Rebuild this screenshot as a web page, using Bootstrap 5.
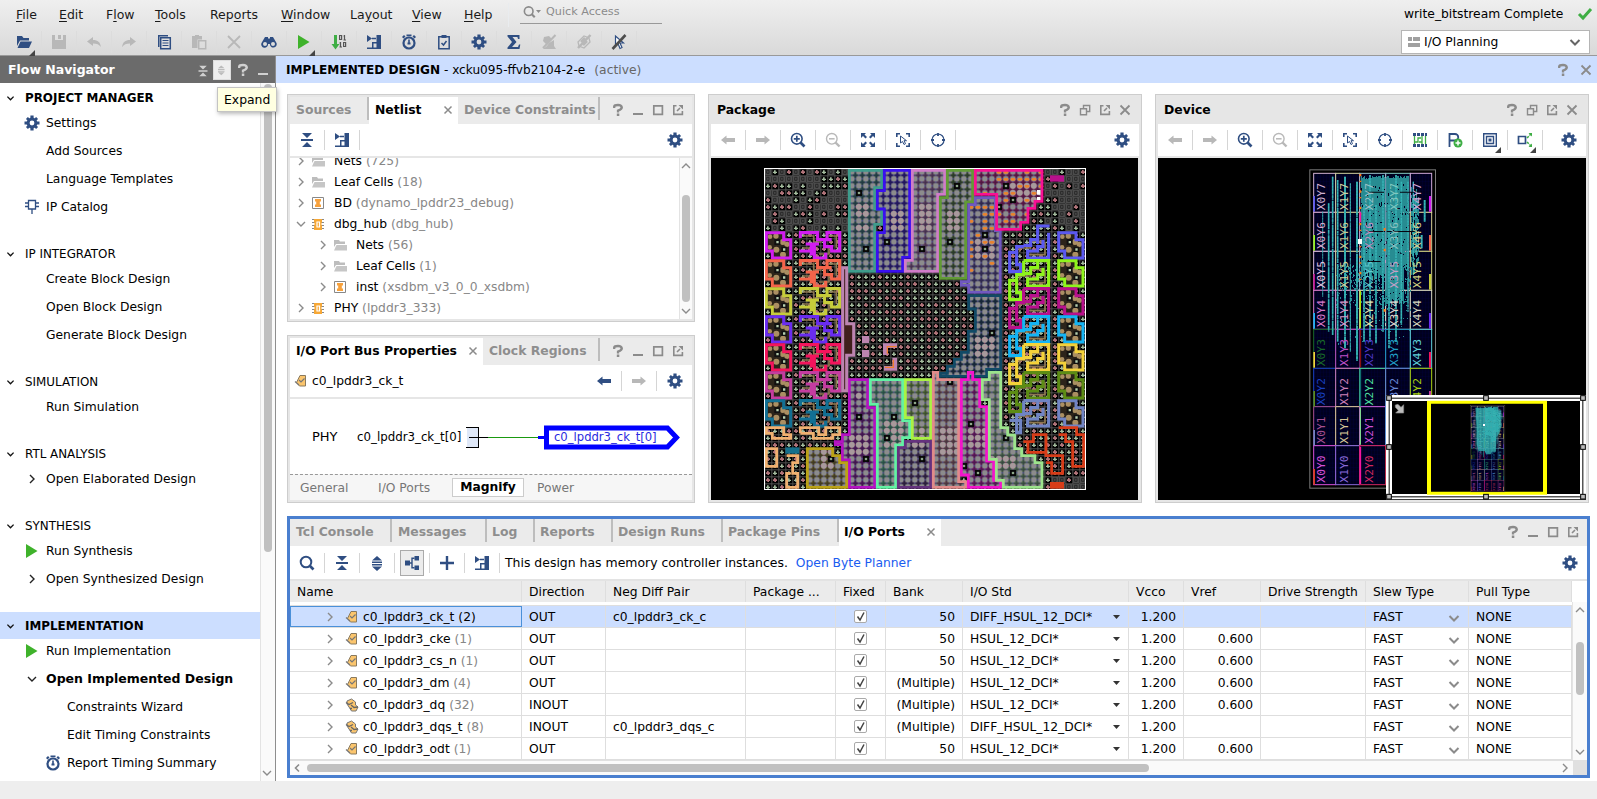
<!DOCTYPE html>
<html lang="en">
<head>
<meta charset="utf-8">
<title>I/O Planning</title>
<link href="https://cdn.jsdelivr.net/npm/bootstrap@5.3.0/dist/css/bootstrap.min.css" rel="stylesheet">
<style>
:root{--ink:#2f4e82;--dim:#8b8b8b;--off:#b8b8b8;--line:#cdcdcd;--chrome:#e6e6e6;--sel:#ccdeff}
body{font:12.3px/16px "DejaVu Sans",sans-serif;color:#000;width:1597px;height:799px;overflow:hidden;background:#fff}
svg.ic{width:16px;height:16px;flex:none;color:var(--ink);display:block}
svg.gy{color:var(--dim)} svg.off{color:var(--off)}
.topbar{height:56px;background:linear-gradient(#efefef,#d9d9d9);border-bottom:1px solid #999}
.menus{height:29px;padding-left:16px;font-size:12.5px}
.menus span{display:block;color:#1a1a1a}
.menus u{text-underline-offset:2px}
.quick{width:142px;height:24px;margin-left:11px;border-bottom:1px solid #999;color:#8b8b8b;font-size:11.2px;padding-left:3px}
.tools{height:27px;padding:2px 0 0 7px}
.tools>div{width:35px;height:22px;border-right:1px solid #dcdcdc;position:relative}
.tools>div>svg{margin:3px 0 0 9px}
.corner::after{content:"";position:absolute;right:6px;bottom:-3px;border:3px solid transparent;border-right-color:#444;border-bottom-color:#444}
.combo{width:189px;height:24px;border:1px solid #b5b5b5;background:#fff}
.side{width:276px;border-right:1px solid #8e8e8e}
.sidehead{height:27px;background:#6b6b6b;color:#fff;padding-left:8px;font-size:12.5px}
.sidehead svg{color:#d0d0d0}
.hd{height:27px;margin:19px 0 -2px;padding-left:5px;font-size:11.9px}
.hd:first-child{margin-top:0}
.hd svg.ic{margin-right:9px;width:11px;color:#111}
.it{height:28px}
.it.fw-bold{font-size:12.5px}
.it .slot{width:46px;padding-left:24px;flex:none}
.it.sub .slot{width:67px;padding-left:45px}
.it svg.blk{color:#222}
.sbar{width:15px;border-left:1px solid #e3e3e3;background:#fafafa;position:relative}
.thumb{background:#c0c0c0;border-radius:4px;width:8px}
.tip{position:absolute;left:217px;top:87px;height:25px;width:60px;background:#ffffe1;border:1px solid #c4c4c4;box-shadow:1px 2px 4px #0004;padding:4px 0 0 6px;z-index:5;font-size:12.400px}
.ident{height:27px;background:var(--sel);padding:0 10px 0 10px}
.pane{border:1px solid var(--line);background:var(--chrome);padding:2px;min-height:0}
.pane.focus{border:3px solid #4a7fcf;padding:0}
.tabs{height:27px;background:#ebebeb;font-weight:bold;font-size:12.400px;color:#8e8e8e;white-space:nowrap}
.tabs>div{height:100%;display:flex;align-items:center;padding-bottom:2px}
.tabs .sp{width:2px;height:23px;background:#bdbdbd;align-self:flex-start;flex:none}
.tabs .on{background:#fff;color:#000}
.wbtn svg{margin-right:4px}
.bar{height:32px;background:#fff;flex:none}
.bar>.b{width:35px;height:20px;border-right:1px solid #d5d5d5;display:flex;justify-content:center;align-items:center;position:relative}
.bar>.n{border:0}
.tree{background:#fff;overflow:hidden}
.tr1{height:21px;white-space:pre}
.tr1 i{font-style:normal;color:#878787}
.tr1 .ic{margin-right:6px}
.grid{display:grid;grid-template-columns:232px 84px 140px 90px 50px 77px 166px 55px 77px 105px 103px 103px}
.grid>div{border-right:1px solid #dedede;padding-left:7px;white-space:pre;display:flex;align-items:center}
.gh{height:21px;background:#ebebeb}
.gr{height:22px;border-bottom:1px solid #dedede;background:#fff}
.gr.pick{background:var(--sel)}
.gr.pick>div:first-child{outline:1px solid #4a90d9;outline-offset:-1px}
.gr i{font-style:normal;color:#878787}.gr.pick i{color:#000}
.gr .num{justify-content:flex-end;padding-right:7px}
.chk{width:13px;height:13px;border:1px solid #aaa;border-radius:2px;background:#fff}
</style>
</head>
<body class="d-flex flex-column">
<svg width="0" height="0" class="position-absolute">
<defs>
<symbol id="gear" viewBox="0 0 16 16"><g fill="currentColor"><path fill-rule="evenodd" d="M8 2.6a5.4 5.4 0 1 0 0 10.8A5.4 5.4 0 0 0 8 2.6zm0 3a2.4 2.4 0 1 1 0 4.8 2.4 2.4 0 0 1 0-4.8z"/><path d="M6.4.5h3.2v3H6.4zM6.4 12.5h3.2v3H6.4zM.5 6.4h3v3.2h-3zM12.500 6.400h3v3.200h-3z"/><path transform="rotate(45 8 8)" d="M6.6.8h2.800v2.700H6.600zM6.600 12.500h2.800v2.700H6.600zM.8 6.600h2.700v2.800H.8zM12.500 6.600h2.700v2.800h-2.700z"/></g></symbol>
<symbol id="open" viewBox="0 0 16 16"><path fill="currentColor" d="M1 2h5l1.500 2H13v2.500H4L1 12zM4.500 7.500H16L13 14H1.500z"/></symbol>
<symbol id="save" viewBox="0 0 16 16"><path fill="currentColor" fill-rule="evenodd" d="M1 1h3v5h8V1h3v14H1zM7 1h3v4H7z"/></symbol>
<symbol id="undo" viewBox="0 0 16 16"><path fill="currentColor" d="M1 7.500 7 3v3c5 0 7 2 8 7-2-2.500-4-3.500-8-3.500V12z"/></symbol>
<symbol id="redo" viewBox="0 0 16 16"><path fill="currentColor" d="M15 7.500 9 3v3c-5 0-7 2-8 7 2-2.500 4-3.500 8-3.500V12z"/></symbol>
<symbol id="copy" viewBox="0 0 16 16"><path fill="none" stroke="currentColor" stroke-width="1.500" d="M4.700 3.700h9.600v11H4.700z"/><path fill="currentColor" d="M2 1h10v1.500H3.500V13H2zM6.500 6h6v1h-6zM6.500 8.500h6v1h-6zM6.500 11h6v1h-6z"/></symbol>
<symbol id="paste" viewBox="0 0 16 16"><path fill="currentColor" d="M1 2h3V1h4v1h3v3.500H6.500V14H1z"/><path fill="none" stroke="currentColor" stroke-width="1.500" d="M7.700 6.700h7v8h-7z"/></symbol>
<symbol id="cut" viewBox="0 0 16 16"><path fill="none" stroke="currentColor" stroke-width="1.800" d="M2 2l12 12M14 2 2 14"/></symbol>
<symbol id="x" viewBox="0 0 16 16"><path fill="none" stroke="currentColor" stroke-width="1.800" d="M3.500 3.500l9 9M12.500 3.500l-9 9"/></symbol>
<symbol id="xs" viewBox="0 0 16 16"><path fill="none" stroke="currentColor" stroke-width="1.500" d="M4.500 4.500l7 7M11.500 4.500l-7 7"/></symbol>
<symbol id="bino" viewBox="0 0 16 16"><path fill="currentColor" fill-rule="evenodd" d="M4 3h3v1.500h2V3h3l3.500 6a3.400 3.400 0 1 1-6.600 1H7A3.400 3.400 0 1 1 .5 9zM4 8a2 2 0 1 0 0 4 2 2 0 0 0 0-4zm8 0a2 2 0 1 0 0 4 2 2 0 0 0 0-4z"/></symbol>
<symbol id="play" viewBox="0 0 16 16"><path fill="#3fb22b" d="M2 1l11.500 7L2 15z"/></symbol>
<symbol id="bits" viewBox="0 0 16 16"><path fill="#3fae45" d="M3 1h3v9h2.500l-4 5.500L.5 10H3z"/><path fill="none" stroke="#555" stroke-width="1.200" d="M8.600 1.500h2v4h-2zM13.500 1v5M12.500 2h1M12.500 6H15M9.500 8v5M8.500 9h1M8.500 13H11M12.600 8.500h2v4h-2z"/></symbol>
<symbol id="sch" viewBox="0 0 16 16"><path fill="currentColor" d="M1 1l5 3.500L1 8zM6 3.800h4v1.400H6zM10.500 1H15v14h-4.500zM6 8h5v1.500H7.500v4H11V15H1v-1.500h5z"/></symbol>
<symbol id="clk" viewBox="0 0 16 16"><circle cx="8" cy="9" r="5.500" fill="none" stroke="currentColor" stroke-width="2.200"/><path fill="currentColor" d="M5.500.5h5v1.700h-5zM7.200 5.500h1.600v3.500H7.200zM6.500 8.500h3v2h-3zM1 3l2-2 1.500 1.500-2 2zM15 3l-2-2-1.500 1.500 2 2z"/></symbol>
<symbol id="clip" viewBox="0 0 16 16"><path fill="none" stroke="currentColor" stroke-width="1.500" d="M2.800 2.800h10.400v12H2.800zM5.500 9l2 2 3-4"/><path fill="currentColor" d="M5.500 1h5v3h-5z"/></symbol>
<symbol id="sum" viewBox="0 0 16 16"><path fill="currentColor" d="M1.500 1h12v4H12l-.6-2H6.500l4 5-4.500 5h6l1-2.500h1.300L13.500 15h-12v-1.500L6 8 1.500 2.500z"/></symbol>
<symbol id="no1" viewBox="0 0 16 16"><path fill="currentColor" d="M3 3l5-1 3 3-6 5-3-3zM8 9l5-3v6l2 3H2l4-3z"/><path stroke="currentColor" stroke-width="2" d="M14.500 1 2 14"/></symbol>
<symbol id="no2" viewBox="0 0 16 16"><path fill="none" stroke="currentColor" stroke-width="1.300" d="M2 8l6-6 5 2 1 4-6 6-5-2z"/><path stroke="currentColor" stroke-width="2.500" d="M14.500 1 2 14M5 8l4-4M7 11l4-4"/></symbol>
<symbol id="no3" viewBox="0 0 16 16"><path fill="#fff" stroke="currentColor" stroke-width="1.200" d="M4.500 2v10l2.500-2.500 2 5 2-1-2-4.500h3.500z"/><path stroke="#4d4d4d" stroke-width="2.600" d="M14.500 1 1.500 15"/></symbol>
<symbol id="mag" viewBox="0 0 16 16"><circle cx="7" cy="7" r="5.300" fill="none" stroke="currentColor" stroke-width="2"/><path stroke="currentColor" stroke-width="2.600" d="M10.500 10.500l4 4"/></symbol>
<symbol id="zi" viewBox="0 0 16 16"><circle cx="6.800" cy="6.800" r="5.300" fill="none" stroke="currentColor" stroke-width="1.600"/><path stroke="currentColor" stroke-width="2.600" d="M10.500 10.500l4 4"/><path stroke="currentColor" stroke-width="1.700" d="M3.800 6.800h6M6.800 3.800v6"/></symbol>
<symbol id="zo" viewBox="0 0 16 16"><circle cx="6.800" cy="6.800" r="5.300" fill="none" stroke="currentColor" stroke-width="1.400"/><path stroke="currentColor" stroke-width="2.400" d="M10.500 10.500l4 4"/><path stroke="currentColor" stroke-width="1.500" d="M4 6.800h5.600"/></symbol>
<symbol id="fit" viewBox="0 0 16 16"><path fill="currentColor" d="M1 1h5L4.500 2.500 7 5 5.500 6.500 3 4 1 6zM15 1h-5l1.500 1.500L9 5l1.500 1.500L13 4l2 2zM1 15h5l-1.500-1.500L7 11 5.500 9.500 3 12l-2-2zM15 15h-5l1.500-1.500L9 11l1.500-1.500L13 12l2-2z"/></symbol>
<symbol id="fsel" viewBox="0 0 16 16"><path fill="none" stroke="currentColor" stroke-width="1.600" d="M5 1.800H1.800V5M11 1.800h3.200V5M5 14.200H1.800V11M11 14.200h3.200V11"/><path fill="#fff" stroke="currentColor" d="M5.500 4v7l2-1.500 1.500 3 1.500-.8-1.500-3h2.500z"/></symbol>
<symbol id="tgt" viewBox="0 0 16 16"><circle cx="8" cy="8" r="6" fill="none" stroke="currentColor" stroke-width="1.200"/><path stroke="currentColor" stroke-width="1.800" d="M8 1v3M8 12v3M1 8h3M12 8h3"/></symbol>
<symbol id="rt" viewBox="0 0 16 16"><path fill="#2f4e82" d="M1 1h3v3H1zM5 1h3v3H5zM9 1h3v3H9zM13 1h2v3h-2zM1 12h3v3H1zM5 12h3v3H5zM9 12h3v3H9zM13 12h2v3h-2z"/><path fill="none" stroke="#3fae45" stroke-width="1.300" d="M2.500 4v8M2.500 10H6V6h3M10 4v8M13.500 4v8M7 10h3"/></symbol>
<symbol id="padd" viewBox="0 0 16 16"><path fill="none" stroke="currentColor" stroke-width="1.800" d="M2.500 15V2H8a3 3 0 0 1 0 6.500H2.500"/><circle cx="11" cy="11" r="4.500" fill="#3fae45"/><path stroke="#fff" stroke-width="1.500" d="M8.500 11h5M11 8.500v5"/></symbol>
<symbol id="sq" viewBox="0 0 16 16"><path fill="none" stroke="currentColor" stroke-width="1.400" d="M1.700 1.700h12.600v12.600H1.700zM4.500 4.500h7v7h-7z"/><path fill="currentColor" d="M6.500 6.500h3v3h-3z"/></symbol>
<symbol id="brk" viewBox="0 0 16 16"><path fill="none" stroke="currentColor" stroke-width="1.700" d="M1.500 4.500h7v7h-7z"/><path stroke="#3fae45" stroke-width="1.600" stroke-dasharray="2.500 1" d="M10 6l4-4M10 10l4 4"/><path fill="#3fae45" d="M11.500 1H15v3.500zM11.500 15H15v-3.500z"/></symbol>
<symbol id="bk" viewBox="0 0 16 16"><path fill="currentColor" d="M1 8l5.500-4.500V6H15v4H6.500v2.500z"/></symbol>
<symbol id="fw" viewBox="0 0 16 16"><path fill="currentColor" d="M15 8 9.500 3.500V6H1v4h8.500v2.500z"/></symbol>
<symbol id="cola" viewBox="0 0 16 16"><path fill="currentColor" d="M3 1h10L8 6zM2 7h12v2H2zM3 15h10L8 10z"/></symbol>
<symbol id="expa" viewBox="0 0 16 16"><path fill="currentColor" d="M8 1l5 4.500H3zM3 6.500h10V8H3zM3 9h10v1.500H3zM8 16l5-4.500H3z"/></symbol>
<symbol id="hlp" viewBox="0 0 16 16"><path fill="none" stroke="currentColor" stroke-width="2.300" d="M4.200 6V4.500q.3-1.500 3.800-1.500t3.800 2.500Q11.500 7.500 8 8.500v2"/><path fill="currentColor" d="M6.800 11.500h2.500V14H6.800z"/></symbol>
<symbol id="min" viewBox="0 0 16 16"><path fill="currentColor" d="M3 11h10v2H3z"/></symbol>
<symbol id="max" viewBox="0 0 16 16"><path fill="none" stroke="currentColor" stroke-width="1.700" d="M3.800 3.800h8.600v8.600H3.800z"/></symbol>
<symbol id="flt" viewBox="0 0 16 16"><path fill="none" stroke="currentColor" stroke-width="1.600" d="M6.500 3.800H3.800v8.600h8.600V9M7 9l3-3"/><path fill="currentColor" d="M8.500 3H13v4.500z"/></symbol>
<symbol id="rst" viewBox="0 0 16 16"><path fill="none" stroke="currentColor" stroke-width="1.400" d="M6.500 6.500V3.500h6.200v6H10M3.500 6.700h6v6h-6z"/></symbol>
<symbol id="dn" viewBox="0 0 16 16"><path fill="none" stroke="currentColor" stroke-width="2" d="M3.500 6l4.500 4.500L12.500 6"/></symbol>
<symbol id="dt" viewBox="0 0 16 16"><path fill="none" stroke="currentColor" stroke-width="1.400" d="M4 6l4 4 4-4"/></symbol>
<symbol id="up" viewBox="0 0 16 16"><path fill="none" stroke="currentColor" stroke-width="1.400" d="M4 10l4-4 4 4"/></symbol>
<symbol id="rg" viewBox="0 0 16 16"><path fill="none" stroke="currentColor" stroke-width="1.400" d="M6 4l4 4-4 4"/></symbol>
<symbol id="lf" viewBox="0 0 16 16"><path fill="none" stroke="currentColor" stroke-width="1.600" d="M9 4.500 5.500 8 9 11.500"/></symbol>
<symbol id="ipc" viewBox="0 0 16 16"><path fill="none" stroke="currentColor" stroke-width="1.300" d="M4.500 1.500h7v8.500h-7zM1 4h3.500M1 7.500h3.500M11.500 4H15M11.500 7.500H15M8 10v5"/></symbol>
<symbol id="fold" viewBox="0 0 16 16"><path fill="#bdbdbd" d="M2 3h5l1 1.500h5V7H4L2 10z"/><path fill="#c6c6c6" d="M4.500 8H15v5.500H2z"/></symbol>
<symbol id="inst" viewBox="0 0 16 16"><path fill="#fff" stroke="#888" d="M2.500 2.500h11v11h-11z"/><path fill="#f7a13c" d="M5 4h6v2.500H9.800v3H11V12H5V9.500h1.200v-3H5z"/></symbol>
<symbol id="chip" viewBox="0 0 16 16"><path stroke="#888" d="M2 3.500h12M2 6.500h12M2 9.500h12M2 12.500h12"/><path fill="#f7a836" d="M4 3h8v3.500h-.5v3h.5V14H4V9.500h.5v-3H4z"/><path fill="none" stroke="#fff" stroke-width="1.200" d="M7 6h2.500v5H7z"/></symbol>
<symbol id="pout" viewBox="0 0 16 16"><path fill="#fbc56d" stroke="#8a7a5e" d="M7 2.500h5.500v10.500H6.500L3.500 9.500z"/><path fill="none" stroke="#777" stroke-width="1.200" d="M6 7l2 2 3.500-3.500M2 8.500l4 3.500"/></symbol>
<symbol id="pio" viewBox="0 0 16 16"><path fill="#fbc56d" stroke="#777" d="M3 4l4.500-2 4 3v3l2.500 2-2 4H7.500L5 10 3 7z"/><path fill="none" stroke="#666" stroke-width="1.300" d="M2 5.500l3 2 4-2M7 8l3 2.500 4-.5M6 11.500h2"/></symbol>
<symbol id="hier" viewBox="0 0 16 16"><path fill="currentColor" d="M1 5.500h5v5H1zM10.500 1H15v4.500h-4.500zM10.500 10.500H15V15h-4.500z"/><path fill="none" stroke="currentColor" stroke-width="1.400" d="M6 8h2M10.500 3.200H8v9.500h2.500"/></symbol>
<symbol id="plus" viewBox="0 0 16 16"><path fill="currentColor" d="M6.800 1h2.400v5.800H15v2.400H9.200V15H6.800V9.200H1V6.800h5.800z"/></symbol>
<symbol id="lay" viewBox="0 0 16 16"><path fill="#a0a0a0" d="M2 3h4v4H2zM7 3h7v4H7zM2 9h12v4H2z"/></symbol>
</defs></svg>

<header class="topbar d-flex flex-none">
  <div class="flex-grow-1">
    <div class="menus d-flex align-items-center">
      <span style="width:43px"><u>F</u>ile</span><span style="width:47px"><u>E</u>dit</span><span style="width:49px">F<u>l</u>ow</span><span style="width:55px"><u>T</u>ools</span><span style="width:71px">Rep<u>o</u>rts</span><span style="width:69px"><u>W</u>indow</span><span style="width:62px">La<u>y</u>out</span><span style="width:52px"><u>V</u>iew</span><span style="width:44px"><u>H</u>elp</span>
      <div class="border-start border-secondary-subtle" style="height:24px"></div>
      <div class="quick d-flex align-items-center align-self-start"><svg class="ic gy" style="width:13px"><use href="#mag"/></svg><svg width="6" height="4" style="margin-right:4px"><path fill="#8b8b8b" d="M0 0h5L2.500 3z"/></svg>Quick Access</div>
    </div>
    <div class="tools d-flex" id="tools"></div>
  </div>
  <div style="width:197px">
    <div class="d-flex align-items-center" style="height:28px;padding-left:4px">write_bitstream Complete<svg class="ic" style="color:#3fae45;margin-left:14px"><path fill="none" stroke="currentColor" stroke-width="3" d="M2 8l4 4 8-9"/></svg></div>
    <div class="combo d-flex align-items-center" style="margin-top:2px;margin-left:1px;padding:0 6px 0 4px"><svg class="ic"><use href="#lay"/></svg><span class="flex-grow-1" style="margin-left:2px">I/O Planning</span><svg class="ic" style="color:#666"><use href="#dn"/></svg></div>
  </div>
</header>

<div class="d-flex flex-grow-1" style="height:725px;min-height:0">
  <aside class="side d-flex flex-column flex-shrink-0">
    <div class="sidehead d-flex align-items-center fw-bold">Flow Navigator
      <span class="ms-auto d-flex gap-1 align-items-center pe-1"><svg class="ic" style="margin-right:-1px"><use href="#cola" transform="translate(3 3) scale(.75)"/></svg><span style="background:#eee;width:18px;height:20px;padding:2px 1px;border:1px solid #ddd"><svg class="ic" style="width:14px;color:#bbb"><use href="#expa" transform="translate(1 1) scale(.75)"/></svg></span><svg class="ic"><use href="#hlp"/></svg><svg class="ic"><use href="#min"/></svg></span></div>
    <div class="d-flex flex-grow-1 overflow-hidden">
      <div class="flex-grow-1" style="padding-top:1px" id="nav"></div>
      <div class="sbar d-flex flex-column align-items-center"><div class="thumb" style="height:468px;margin:1px 1px 0 0"></div><svg class="ic gy mt-auto" style="margin-right:2px"><use href="#dt"/></svg></div>
    </div>
  </aside>
  <div class="tip">Expand</div>
  <main class="flex-grow-1 d-flex flex-column">
    <div class="ident d-flex align-items-center"><b style="font-size:12.100px">IMPLEMENTED DESIGN</b><span style="font-size:12.100px">&nbsp;- xcku095-ffvb2104-2-e</span><span style="color:#666;margin-left:9px">(active)</span><svg class="ic gy ms-auto" style="margin-right:7px"><use href="#hlp"/></svg><svg class="ic gy" style="margin-right:-5px"><use href="#x"/></svg></div>
    <div class="d-flex" style="padding:11px 8px 0 11px;gap:13px;height:420px">
      <div class="d-flex flex-column" style="width:408px;gap:13px">
        <section class="pane d-flex flex-column" style="height:228px">
          <div class="tabs d-flex">
            <div style="width:77px;padding-left:6px">Sources</div><div class="sp"></div>
            <div class="on" style="width:89px;padding-left:6px">Netlist<svg class="ic gy ms-auto" style="margin-right:2px"><use href="#xs"/></svg></div>
            <div style="width:140px;padding-left:6px">Device Constraints</div><div class="sp"></div>
            <div class="wbtn" style="padding-left:10px"><svg class="ic gy"><use href="#hlp"/></svg><svg class="ic gy"><use href="#min"/></svg><svg class="ic gy"><use href="#max"/></svg><svg class="ic gy"><use href="#flt"/></svg></div>
          </div>
          <div class="bar d-flex align-items-center"><div class="b"><svg class="ic"><use href="#cola"/></svg></div><div class="b"><svg class="ic"><use href="#sch"/></svg></div><div class="b n ms-auto"><svg class="ic"><use href="#gear"/></svg></div></div>
          <div class="tree d-flex flex-grow-1" style="margin-top:2px"><div class="flex-grow-1" style="margin-top:-8px" id="tree"></div>
            <div class="sbar flex-shrink-0 d-flex flex-column align-items-center" style="width:13px"><svg class="ic gy"><use href="#up"/></svg><div class="thumb" style="height:107px;margin-top:21px"></div><svg class="ic gy mt-auto"><use href="#dt"/></svg></div></div>
        </section>
        <section class="pane d-flex flex-column" style="height:168px">
          <div class="tabs d-flex">
            <div class="on" style="width:193px;padding-left:6px">I/O Port Bus Properties<svg class="ic gy ms-auto" style="margin-right:2px"><use href="#xs"/></svg></div>
            <div style="width:115px;padding-left:6px">Clock Regions</div><div class="sp"></div>
            <div class="wbtn" style="padding-left:10px"><svg class="ic gy"><use href="#hlp"/></svg><svg class="ic gy"><use href="#min"/></svg><svg class="ic gy"><use href="#max"/></svg><svg class="ic gy"><use href="#flt"/></svg></div>
          </div>
          <div class="bar d-flex align-items-center"><svg class="ic" style="margin:0 2px 0 3px"><use href="#pout"/></svg><span style="margin-left:1px">c0_lpddr3_ck_t</span><div class="b ms-auto"><svg class="ic"><use href="#bk"/></svg></div><div class="b"><svg class="ic off"><use href="#fw"/></svg></div><div class="b n"><svg class="ic"><use href="#gear"/></svg></div></div>
          <svg width="402" height="75" style="background:#fff;margin-top:2px" shape-rendering="crispEdges"><text x="22" y="42" font-size="13">PHY</text><text x="67" y="42" font-size="11.800">c0_lpddr3_ck_t[0]</text><rect x="177" y="29" width="12" height="19" fill="#dfe8f8"/><path fill="none" stroke="#000" d="M176 28.500h12.500v20H176M179 38.500h19"/><path stroke="#1a9a10" d="M198 38.500h50"/><path stroke="#00f" stroke-width="3" d="M248 38.500h8"/><path fill="#fff" stroke="#00f" stroke-width="5" shape-rendering="auto" d="M256.500 29h121l9 9.500-9 9.500h-121z"/><text x="264" y="42" fill="#2a2ae0" font-size="11.600">c0_lpddr3_ck_t[0]</text></svg>
          <div class="d-flex align-items-center flex-grow-1" style="background:#f6f6f6;border-top:1px dashed #999;color:#777;padding-left:10px"><span style="width:78px">General</span><span style="width:74px">I/O Ports</span><b class="text-black text-center bg-white" style="border:1px solid #ccc;width:72px;height:19px">Magnify</b><span style="margin-left:13px">Power</span></div>
        </section>
      </div>
      <section class="pane" style="width:434px;height:409px">
        <div class="tabs d-flex" style="background:#e6e6e6;color:#000"><div style="padding-left:6px">Package</div><div class="wbtn ms-auto" style="padding-right:2px"><svg class="ic gy"><use href="#hlp"/></svg><svg class="ic gy"><use href="#rst"/></svg><svg class="ic gy"><use href="#flt"/></svg><svg class="ic gy"><use href="#x"/></svg></div></div>
        <div class="bar d-flex align-items-center" id="pbar"></div>
        <svg id="pkg" class="d-block bg-black" style="margin-top:2px" width="427" height="342" viewBox="-117 9 1281 1026"></svg>
      </section>
      <section class="pane" style="width:434px;height:409px">
        <div class="tabs d-flex" style="background:#e6e6e6;color:#000"><div style="padding-left:6px">Device</div><div class="wbtn ms-auto" style="padding-right:2px"><svg class="ic gy"><use href="#hlp"/></svg><svg class="ic gy"><use href="#rst"/></svg><svg class="ic gy"><use href="#flt"/></svg><svg class="ic gy"><use href="#x"/></svg></div></div>
        <div class="bar d-flex align-items-center" id="dbar"></div>
        <svg id="dev" class="d-block bg-black" style="margin-top:2px" width="428" height="342" viewBox="-396 9 1284 1026"></svg>
      </section>
    </div>
    <section class="pane focus d-flex flex-column" style="margin:13px 9px 0 11px;height:262px">
      <div class="tabs d-flex">
        <div style="width:100px;padding-left:6px">Tcl Console</div><div class="sp"></div><div style="width:93px;padding-left:6px">Messages</div><div class="sp"></div><div style="width:46px;padding-left:5px">Log</div><div class="sp"></div><div style="width:76px;padding-left:5px">Reports</div><div class="sp"></div><div style="width:108px;padding-left:5px">Design Runs</div><div class="sp"></div><div style="width:114px;padding-left:5px">Package Pins</div><div class="sp"></div>
        <div class="on" style="width:102px;padding-left:5px">I/O Ports<svg class="ic gy ms-auto" style="margin-right:2px"><use href="#xs"/></svg></div>
        <div class="wbtn ms-auto" style="padding-right:2px"><svg class="ic gy"><use href="#hlp"/></svg><svg class="ic gy"><use href="#min"/></svg><svg class="ic gy"><use href="#max"/></svg><svg class="ic gy"><use href="#flt"/></svg></div>
      </div>
      <div class="bar d-flex align-items-center" style="height:33px;font-size:12.450px"><div class="b"><svg class="ic"><use href="#mag"/></svg></div><div class="b"><svg class="ic"><use href="#cola"/></svg></div><div class="b"><svg class="ic"><use href="#expa"/></svg></div><div class="b"><span style="border:1px solid #aaa;background:#ececec;padding:4px 3px"><svg class="ic"><use href="#hier"/></svg></span></div><div class="b"><svg class="ic"><use href="#plus"/></svg></div><div class="b"><svg class="ic"><use href="#sch"/></svg></div><span style="margin-left:5px">This design has memory controller instances.</span><span style="color:#1a5cf0;margin-left:8px;font-size:12.300px">Open Byte Planner</span><div class="b n ms-auto"><svg class="ic"><use href="#gear"/></svg></div></div>
      <div class="d-flex flex-grow-1 bg-white" style="border-top:2px solid #e3e3e3">
        <div style="width:1282px" id="ports"></div>
        <div class="sbar flex-grow-1 d-flex flex-column align-items-center" style="margin-top:21px"><svg class="ic gy"><use href="#up"/></svg><div class="thumb" style="height:53px;margin-top:24px"></div><svg class="ic gy mt-auto"><use href="#dt"/></svg></div>
      </div>
      <div class="d-flex align-items-center" style="height:15px;background:#fafafa;border-top:1px solid #e0e0e0"><svg class="ic gy"><use href="#lf"/></svg><div class="thumb" style="width:842px;height:8px;margin-left:1px"></div><svg class="ic gy ms-auto"><use href="#rg"/></svg><div style="width:14px;height:14px;background:#e0e0e0"></div></div>
    </section>
  </main>
</div>
<footer style="height:18px;background:#eee;flex:none"></footer>

<script src="https://cdn.jsdelivr.net/npm/bootstrap@5.3.0/dist/js/bootstrap.bundle.min.js"></script>
<script>
const ic=(n,c='')=>`<svg class="ic ${c}"><use href="#${n}"/></svg>`;
const put=(id,h)=>document.getElementById(id).innerHTML=h;

put('tools',[['open','','corner'],['save','off'],['undo','off'],['redo','off'],['copy'],['paste','off'],['cut','off'],['bino'],['play','','corner'],['bits'],['sch'],['clk'],['clip'],['gear'],['sum'],['no1','off'],['no2','off'],['no3']].map(a=>`<div class="${a[2]||''}">${ic(a[0],a[1])}</div>`).join(''));

const b=(n,c='',d='')=>`<div class="b ${d}">${ic(n,c)}</div>`;
const common=b('bk','off')+b('fw','off')+b('zi')+b('zo','off')+b('fit')+b('fsel')+b('tgt');
put('pbar',common+b('gear','','n ms-auto'));
put('dbar',common+b('rt')+b('padd')+b('sq','','corner')+b('brk','','corner')+b('gear','','n ms-auto'));

const nav=[['PROJECT MANAGER',1,[['gear','Settings'],['','Add Sources'],['','Language Templates'],['ipc','IP Catalog']]],
['IP INTEGRATOR',0,[['','Create Block Design'],['','Open Block Design'],['','Generate Block Design']]],
['SIMULATION',0,[['','Run Simulation']]],
['RTL ANALYSIS',0,[['rg','Open Elaborated Design']]],
['SYNTHESIS',0,[['play','Run Synthesis'],['rg','Open Synthesized Design']]],
['IMPLEMENTATION',2,[['play','Run Implementation'],['dt','Open Implemented Design','fw-bold'],['','Constraints Wizard','sub'],['','Edit Timing Constraints','sub'],['clk','Report Timing Summary','sub']]]];
put('nav',nav.map(g=>`<div class="hd d-flex align-items-center ${g[1]?'fw-bold':''}" ${g[1]==2?'style="background:var(--sel)"':''}>${ic('dn')}${g[0]}</div>`+
 g[2].map(i=>`<div class="it d-flex align-items-center ${i[2]||''}"><span class="slot">${i[0]?ic(i[0],/rg|dt/.test(i[0])?'blk':''):''}</span>${i[1]}</div>`).join('')).join(''));

put('tree',[[0,'rg','fold','Nets','(725)'],[0,'rg','fold','Leaf Cells','(18)'],[0,'rg','inst','BD','(dynamo_lpddr23_debug)'],[0,'dt','chip','dbg_hub','(dbg_hub)'],[1,'rg','fold','Nets','(56)'],[1,'rg','fold','Leaf Cells','(1)'],[1,'rg','inst','inst','(xsdbm_v3_0_0_xsdbm)'],[0,'rg','chip','PHY','(lpddr3_333)']]
.map(r=>`<div class="tr1 d-flex align-items-center" style="padding-left:${3+r[0]*22}px">${ic(r[1],'gy me-0')}<span style="width:1px"></span>${ic(r[2])}<span style="margin-left:2px">${r[3]} <i>${r[4]}</i></span></div>`).join(''));

const heads=['Name','Direction','Neg Diff Pair','Package ...','Fixed','Bank','I/O Std','Vcco','Vref','Drive Strength','Slew Type','Pull Type'];
const rows=[['ck_t','2','OUT','c0_lpddr3_ck_c','50',1,''],['cke','1','OUT','','50',0,'0.600'],['cs_n','1','OUT','','50',0,'0.600'],['dm','4','OUT','','(Multiple)',0,'0.600'],['dq','32','INOUT','','(Multiple)',0,'0.600'],['dqs_t','8','INOUT','c0_lpddr3_dqs_c','(Multiple)',1,''],['odt','1','OUT','','50',0,'0.600']];
put('ports',`<div class="grid gh">${heads.map(h=>`<div>${h}</div>`).join('')}</div><div style="height:4px;border-bottom:1px solid #dedede"></div>`+
rows.map((r,i)=>`<div class="grid gr ${i?'':'pick'}"><div style="padding-left:32px">${ic('rg','gy')}<span style="width:6px"></span>${ic(r[2]=='OUT'?'pout':'pio')}<span style="margin-left:3px">c0_lpddr3_${r[0]} <i>(${r[1]})</i></span></div><div>${r[2]}</div><div>${r[3]}</div><div></div><div class="justify-content-center ps-0"><svg class="chk"><path fill="none" stroke="#444" stroke-width="1.500" d="M2.500 5.500l2.500 3.500L9 1.500"/></svg></div><div class="num">${r[4]}</div><div>${r[5]?'DIFF_HSUL_12_DCI*':'HSUL_12_DCI*'}<svg class="ms-auto" width="7" height="4" style="margin-right:8px"><path fill="#333" d="M0 0h7L3.500 4z"/></svg></div><div class="num">1.200</div><div class="num">${r[6]}</div><div></div><div>FAST<span class="ms-auto" style="margin:2px 6px 0 0">${ic('dn','gy')}</span></div><div>NONE</div></div>`).join(''));

/* deterministic noise for the canvas views */
let seed=7;const rnd=()=>(seed=(seed*16807)%2147483647)/2147483647;

/* package view: 46 x 46 pins, one pin is 21 units wide */
(function(){
 const X=43,Y=40,C=21;let s='';
 s+=`<defs><pattern id="pads" width="21" height="21" patternUnits="userSpaceOnUse" x="43" y="40"><path stroke="#4a48a0" stroke-width="3" d="M0 10.500h21M10.500 0v21"/><path stroke="#26263c" stroke-width="2" d="M0 0h21M0 0v21"/><rect x="2.500" y="2.500" width="16" height="16" rx="5" fill="#8c8c8c"/></pattern>
 <pattern id="lines" width="21" height="21" patternUnits="userSpaceOnUse" x="43" y="40"><path fill="none" stroke="#505050" stroke-width="6" d="M0 0h21M0 0v21"/></pattern></defs>`;
 s+=`<rect x="43" y="40" width="963" height="963" fill="url(#lines)"/>`;
 let g='',p='',z='',q0='';
 for(let r=0;r<46;r++)for(let c=0;c<46;c++){
  const x=X+c*C+11,y=Y+r*C+11;
  const corner=(r<9&&(c<12||c>39))||(r>43&&c>39);
  if(corner&&rnd()<.55){z+=`M${x-9} ${y-9}h18v18h-18z`;q0+=`M${x-4} ${y-5}h7v9h-7z`;continue}
  if((r+c)%2?rnd()<.3:rnd()<.85) g+=`M${x-6} ${y-1}h3v-4h5v4h4v4h-3v2h-6v-2h-3z`; else p+=`M${x-6} ${y-2}h3v-4h5v4h4v5h-3v3h-5v-3h-4z`;
 }
 s+=`<path fill="#4c4c4c" d="${z}"/><path fill="none" stroke="#282828" stroke-width="3" d="${q0}"/><path fill="#a4bc9e" d="${g}"/><path fill="#b4767c" d="${p}"/>`;
 const banks=[['#3e9c8c','M298,46H395V98H374V162H395V208H374V349H298Z'],['#3a10f0','M403,46H479V307H458V349H382V233H403V162H382V107H403Z'],['#d07cc8','M487,46H584V118H563V349H466V316H487Z'],['#619a36','M592,46H668V141H647V370H571V128H592Z'],['#7058c0','M676,128H736V227H751V412H656V391H634V380H656V149H676Z'],['#f81094','M676,46H876V139H855V160H834V202H812V223H740V118H676Z'],['#114a66','M656,422H752V643H710V664H571V655H592V634H613V613H634V592H655V529H676V462H656Z'],
 ['#b412c2','M298,674H353V758H374V997H298V915H277V869H256V860H277V839H298Z'],['#62f2a4','M361,674H458V797H479V848H458V870H437V997H382V748H361Z'],['#aaf244','M466,674H542V850H487V788H466Z'],['#65327e','M466,859H542V997H445V878H466Z'],['#e18a8a','M550,652H563V674H626V980H647V997H550Z'],['#f414cc','M634,674H655V652H668V674H689V755H710V918H731V976H752V997H655V960H634Z'],['#9ce48c','M697,674H718V652H752V818H773V840H794V881H815V902H855V923H876V997H760V976H739V913H718V734H697Z'],['#bba216','M172,881H248V902H269V923H290V997H172Z']];
 banks.forEach(([c,d])=>s+=`<path fill="#10101c" d="${d}"/><path fill="${c}" fill-opacity=".36" d="${d}"/><path fill="url(#pads)" d="${d}"/>`);
 /* highlighted pads: warm clusters, orange signals and unused pins */
 const pad=(c,r,f)=>`<circle cx="${X+c*C+10.500}" cy="${Y+r*C+10.500}" r="8.500" fill="${f}"/>`;
 [[13,5,2,2],[13,8,2,1],[18,6,2,3],[22,5,2,4],[26,6,2,3],[30,10,3,3],[35,2,4,3],[30,24,3,2],[30,26,2,1],[12,38,3,3],[17,36,3,4],[21,39,2,1],[22,37,1,2],[25,37,3,4],[29,37,3,3],[32,41,4,2],[8,40,2,3],[13,32,1,1]].forEach(([c,r,w,h])=>{for(let i=0;i<w;i++)for(let j=0;j<h;j++){s+=`<path stroke="#a04048" stroke-width="2" d="M${X+(c+i)*C} ${Y+(r+j)*C+10}h21M${X+(c+i)*C+10} ${Y+(r+j)*C}v21"/>`+pad(c+i,r+j,'#a89a9c')}});
 for(let r=0;r<15;r++)for(let c=29;c<40;c++){const m=(r<4&&c>30)||(r<8&&c>32&&c<38-(r>6));const q=r>4&&c<33&&c>28;if((m||q)&&rnd()<.5)s+=`<rect x="${X+c*C+4}" y="${Y+r*C+8}" width="14" height="8" rx="4" fill="#e8822e"/>`}
 [[13,3],[14,11],[17,10],[27,2],[35,4],[26,10],[34,2],[31,9],[21,33],[17,38],[14,41],[9,41],[26,30],[29,36],[34,38],[35,43],[22,41],[30,43],[13,35],[18,35],[22,11],[33,5],[31,11],[32,23],[28,42]].forEach(([c,r])=>s+=`<rect x="${X+c*C+2}" y="${Y+r*C+2}" width="18" height="18" fill="#080808"/><circle cx="${X+c*C+11}" cy="${Y+r*C+11}" r="4" fill="#8fa88a"/>`);
 banks.forEach(([c,d])=>s+=`<path fill="none" stroke="${c}" stroke-width="8.500" d="${d}"/>`);
 /* byte-lane outlines on both flanks */
 const A=(c,x,y)=>s+=`<g transform="translate(${x} ${y})"><path fill="#2c241a" d="M4 4H56V25H77V80H22V59H4Z"/><g fill="#ab8f62"><circle cx="15" cy="16" r="7"/><circle cx="33" cy="14" r="8"/><circle cx="53" cy="32" r="9"/><circle cx="66" cy="39" r="8"/><circle cx="34" cy="55" r="9"/><circle cx="54" cy="70" r="9"/><circle cx="14" cy="48" r="7"/></g><path fill="#111" d="M28 23h18v18H28zM49 46h16v16H49z"/><path fill="#b7cfae" d="M34 29h7v7h-7zM54 51h7v7h-7z"/><path fill="none" stroke="${c}" stroke-width="9" d="M4 4H56V25H77V80H22V59H4Z"/></g>`;
 const B=(c,x,y)=>s+=`<g transform="translate(${x} ${y})" fill="none"><path stroke="#8e7850" stroke-width="5" d="M12 14H44V32H68M88 14H112V50M10 50H36M60 68H90V50"/><path stroke="${c}" stroke-width="9.500" d="M0 4H56V25H77V46H98V59H122V4H84V25H98M4 4V20M0 59H37V38H60M46 38V80H80V64M37 59L37 68H46M20 38H37"/></g>`;
 ['#d21cf0','#f4644a','#c6cc3a','#6a2cf0','#f4145c','#c43ca0','#127094'].forEach((c,i)=>{A(c,45,229+84*i);B(c,147,229+84*i)});
 ['#5a58f0','#8ef41c','#b8108c','#14b4f4','#f4d23a','#5c8c14','#7084c4'].forEach((c,i)=>{A(c,922,229+84*i);
  const y=229+84*i;s+=`<g transform="translate(775 ${y})" fill="none"><path stroke="#8e7850" stroke-width="5" d="M34 62V50H66V30H108M54 70H110V32"/><path stroke="${c}" stroke-width="9.500" d="M${i?46:124} ${i?4:-16}H${i?121:88}V38M46 ${i?4:46}V46H25V63H4V${i==6?63:121}H37V100H25V63M46 42H67V25H88V4M121 4V80H58V59H88V46H104V25"/></g>`});
 s+=`<g fill="none" stroke-width="8.500"><path stroke="#f0b070" d="M49 835V818H101V839H122V850H67V835ZM151 835V818H206V839H227V818H269V839H248V850H190V835H151M49 881H80V934H49ZM110 902H143V923H128V955H143V997H110V955H122"/><path stroke="#d83c18" d="M820 860H850V839H888V892H834V860M926 818H980V839H1001V934H968V860H947V839H926M888 870V902H938V955H905V923H888"/></g><path fill="#16708c" d="M106 877h42v19h-42z"/><path fill="#b8108c" d="M900 61h42v19h-42z"/><path fill="#d83c18" d="M900 981h42v20h-42z"/>
 <g fill="none" stroke="#bc84b0" stroke-width="9"><path fill="#40201c" d="M278 338H290V506H311V601H290V707H278Z"/><path d="M341 553H352M352 548V558M341 595H352M352 590V600" stroke-width="12"/><path stroke-width="14" d="M441 572H406V600M402 640H434V608"/></g><path fill="#bc84b0" d="M336 543h21v21h-21zM336 585h21v21h-21z"/><path stroke="#f08030" stroke-width="4" fill="none" d="M440 575H412V596M405 637H430V614"/>
 <path fill="#fff" d="M861 105h10v14h-10zM861 126h10v9h-10z"/><rect x="43.500" y="40.500" width="963" height="963" fill="none" stroke="#fff" stroke-width="3"/>`;
 put('pkg',s);
})();

/* device view: 5 x 8 clock regions with routed nets on top */
(function(){
 const xs=[71,137,209,287,361,425],ys=[55,172,289,406,523,640,755,872,989];
 const col=[['#d0b0d0','#d0d0a0','#98c0c8','#80c8c0','#d0a8d8'],['#d8a8d0','#c8c890','#c090c0','#88c0c0','#d8d090'],['#e0c0e0','#d0d098','#60c8d0','#c8a0c8','#d0d080'],['#d878c8','#d898c8','#e0e0b0','#e0d8d0','#d8d8c0'],['#186828','#c050c8','#5038c8','#20a0c8','#60d0d8'],['#1840c0','#d080b8','#50e0a0','#6888d8','#a8d010'],['#a85090','#d8c898','#d050d8','#58a0e0','#80c850'],['#d850d8','#8868d8','#d02860','#c83050','#d84090']];
 let s=`<defs><pattern id="fab" width="9" height="13" patternUnits="userSpaceOnUse"><path fill="#00001e" d="M0 0h9v13H0z"/><path stroke="#000048" stroke-width="1.500" d="M0 0h9M0 0v13"/></pattern></defs><g id="chipmap"><rect x="59.500" y="44.500" width="377" height="955" fill="#000" stroke="#7c7c7c" stroke-width="3"/>`;
 for(let r=0;r<8;r++)for(let c=0;c<5;c++)s+=`<rect x="${xs[c]}" y="${ys[r]}" width="${xs[c+1]-xs[c]}" height="${ys[r+1]-ys[r]}" fill="url(#fab)" stroke="${col[r][c]}" stroke-width="3"/>`;
 let d='';
 for(let x=213;x<356;x+=3){let y=62+rnd()*10;const end=x<285?385-rnd()*50:(x>340?350:455)-rnd()*25;while(y<end){const h=20+rnd()*90;d+=`M${x} ${y|0}h3v${Math.min(h,end-y+4)|0}h-3z`;y+=h+(rnd()<.7?3:rnd()*9)}}
 for(let x=362;x<385;x+=3){let y=90+rnd()*50;const end=370-rnd()*150;while(y<end){const h=4+rnd()*20;d+=`M${x} ${y|0}h3v${h|0}h-3z`;y+=h+rnd()*16}}
 for(let i=0;i<500;i++){const x=138+rnd()*225,y=330+rnd()*rnd()*240;d+=`M${x|0} ${y|0}h3v4h-3z`}
 s+=`<path fill="#278c92" shape-rendering="crispEdges" d="${d}"/>`;
 [[98,170,425,2],[116,145,530],[128,65,540],[143,75,560],[165,65,580,6],[181,85,590,3],[201,80,620,6],[222,150,560],[240,60,560],[258,150,565],[279,60,530],[297,150,580],[318,60,565],[334,80,510],[354,80,470,4],[370,80,360,4],[395,240,280,6],[378,130,300,4],[404,135,200,6]].forEach(([x,a,b,w])=>s+=`<path stroke="#2fa4a8" stroke-width="${w||5}" stroke-dasharray="${30+(x%7)*12} 2 9 1 3 3" d="M${x} ${a}V${b}"/><path stroke="#40c4c4" stroke-width="2" stroke-dasharray="6 3" d="M${x} ${a}V${b}"/>`);
 s+=`<path fill="#050510" d="M232 110h50v3h-50zM290 228h90v3h-90zM230 228h50v3h-50zM232 318h40v3h-40zM330 110h50v3h-50z"/>`;
 for(let r=0;r<8;r++)for(let c=0;c<5;c++)s+=`<text transform="translate(${[104,174,249,323,392][c]} ${ys[r]+111}) rotate(-90)" font-family="DejaVu Sans Mono,monospace" font-size="34" fill="${col[r][c]}">X${c}Y${7-r}</text>`;
 s+=`<path stroke="#d0a0d0" stroke-width="2" d="M209 55V406M287 55V406" opacity=".7"/><path stroke="#ff7a10" stroke-width="6" stroke-dasharray="7 13 4 25" d="M211 57V380"/><path stroke="#f414a0" stroke-width="5" d="M211 172v30M211 875v112"/><path stroke="#b0e000" stroke-width="4" d="M211 408v112"/><path stroke="#8a1010" stroke-width="5" d="M211 525v112"/><path stroke="#107070" stroke-width="5" d="M211 642v112"/><path stroke="#80d890" stroke-width="4" d="M211 757v112"/><path fill="#fff" d="M204 252h12v15h-12z"/><path fill="#ff7a10" d="M281 219h6v8h-6zM281 281h6v8h-6zM281 462h6v8h-6z"/>`;
 ['#5a58f0','#8ef41c','#b8108c','#14b4f4','#f4d23a','#5c8c14','#7084c4','#d83c18'].forEach((c,i)=>s+=`<rect x="70" y="${123+117*i}" width="5" height="47" fill="${c}"/>`);
 ['#d21cf0','#f4644a','#c6cc3a','#6a2cf0','#f4145c','#c43ca0','#127094','#f0b070'].forEach((c,i)=>s+=`<rect x="417" y="${123+117*i}" width="6" height="47" fill="${c}"/>`);
 s+='</g>';
 s+=`<path fill="#fff" d="M288 720h601v313H288z"/><rect x="297.500" y="729.500" width="581" height="296" fill="none" stroke="#000" stroke-width="3"/><path fill="#000" d="M306 738h564v279H306z"/><path fill="none" stroke="#ff0" stroke-width="12" d="M417 738V1016M765 738V1016"/><path fill="none" stroke="#ff0" stroke-width="9" d="M411 742H771M411 1015H771"/><use href="#chipmap" transform="translate(526 739) scale(.272)"/><path fill="#34b4b4" fill-opacity=".75" d="M556 758h56l4 8h18v48l-6 20-8 12-2 44h-12l-4 8h-14l-4-10h-18l-6-20v-50z"/><rect x="579" y="807" width="6" height="6" fill="#fff"/><path fill="#bbb" stroke="#888" stroke-width="2" d="M316 750l8-2 9 9 8-8v25h-24l8-8-9-9z"/>`;
 [[297,729],[588,729],[879,729],[297,876],[879,876],[297,1025],[588,1025],[879,1025]].forEach(([x,y])=>s+=`<rect x="${x-7}" y="${y-7}" width="14" height="14" fill="#bcbcbc" stroke="#000" stroke-width="3"/>`);
 put('dev',s);
})();
</script>
</body>
</html>
